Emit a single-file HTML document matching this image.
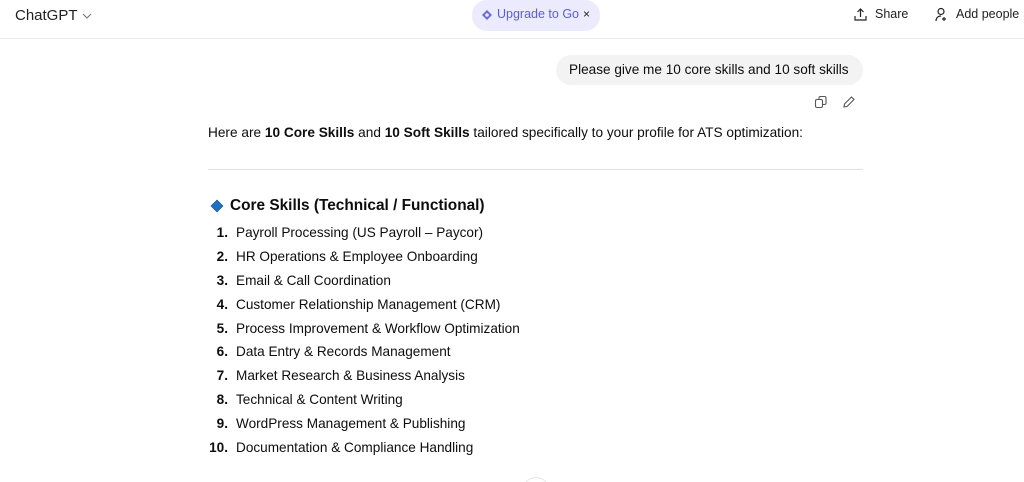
<!DOCTYPE html>
<html style="overflow:hidden;height:482px"><head><style>
body{margin:0;width:1024px;height:482px;overflow:hidden;background:#fff;font-family:"Liberation Sans",sans-serif;color:#0d0d0d;position:relative}
.a{position:absolute;white-space:nowrap}
.hdr{position:absolute;left:0;top:38px;width:1024px;height:1px;background:#ececec}
ol{position:absolute;left:208px;top:223px;margin:0;padding:0;list-style:none;font-size:13.6px}
ol li{height:23.9px;line-height:20px;position:relative;padding-left:28px}
ol li b{position:absolute;right:calc(100% - 20px);font-weight:bold}
</style></head><body>
<div class="a" style="left:15px;top:7px;font-size:15px;color:#222">ChatGPT <svg width="10" height="8" viewBox="0 0 10 8" style="margin-left:1px"><path d="M1 2l4 4 4-4" fill="none" stroke="#777" stroke-width="1.1"/></svg></div>
<div class="a" style="left:472px;top:0;width:128px;height:31px;border-radius:15px;background:#ebebfd"></div>
<svg class="a" style="left:481px;top:9px" width="12" height="12" viewBox="0 0 12 12"><path d="M6 1L11 6 6 11 1 6Z" fill="#6a6ad9"/><circle cx="6" cy="6" r="1.8" fill="#ebebfd"/></svg>
<div class="a" style="left:497px;top:7px;font-size:12.5px;color:#5c5cd6">Upgrade to Go</div>
<div class="a" style="left:583px;top:7px;font-size:12px;color:#222">×</div>
<svg class="a" style="left:853px;top:7px" width="15" height="15" viewBox="0 0 15 15"><path d="M7.5 10V2M4.5 5l3-3 3 3M2 9v4h11V9" fill="none" stroke="#222" stroke-width="1.2"/></svg>
<div class="a" style="left:875px;top:7px;font-size:12.5px;color:#222">Share</div>
<svg class="a" style="left:934px;top:7px" width="15" height="15" viewBox="0 0 15 15"><circle cx="7" cy="4.5" r="3" fill="none" stroke="#222" stroke-width="1.2"/><path d="M2 14c0-3 2-5 5-5M10 10v4M8 12h4" fill="none" stroke="#222" stroke-width="1.2"/></svg>
<div class="a" style="left:956px;top:7px;font-size:12.5px;color:#222">Add people</div>
<div class="hdr"></div>
<div class="a" style="left:556px;top:55px;width:307px;height:30px;border-radius:15px;background:#f3f3f3"></div>
<div class="a" style="left:569px;top:62px;font-size:13.6px">Please give me 10 core skills and 10 soft skills</div>
<svg class="a" style="left:814px;top:95px" width="14" height="14" viewBox="0 0 14 14"><rect x="1.5" y="4.5" width="7" height="8" rx="1.5" fill="none" stroke="#555" stroke-width="1.1"/><path d="M5 4V3a1.5 1.5 0 0 1 1.5-1.5h4A1.5 1.5 0 0 1 12 3v5a1.5 1.5 0 0 1-1.5 1.5H9" fill="none" stroke="#555" stroke-width="1.1"/></svg>
<svg class="a" style="left:842px;top:95px" width="14" height="14" viewBox="0 0 14 14"><path d="M2 12l.5-3 7-7 2.5 2.5-7 7z" fill="none" stroke="#555" stroke-width="1.1"/></svg>
<div class="a" style="left:208px;top:125px;font-size:13.65px">Here are <b>10 Core Skills</b> and <b>10 Soft Skills</b> tailored specifically to your profile for ATS optimization:</div>
<div class="a" style="left:208px;top:169px;width:655px;height:1px;background:#e0e0e0"></div>
<svg class="a" style="left:210px;top:199px" width="14" height="14" viewBox="0 0 14 14"><path d="M7 1L13 7 7 13 1 7Z" fill="#1f6fc5" stroke="#114a8a" stroke-width=".6"/></svg>
<div class="a" style="left:230px;top:197px;font-size:15.4px;font-weight:bold">Core Skills (Technical / Functional)</div>
<ol>
<li><b>1.</b>Payroll Processing (US Payroll – Paycor)</li>
<li><b>2.</b>HR Operations &amp; Employee Onboarding</li>
<li><b>3.</b>Email &amp; Call Coordination</li>
<li><b>4.</b>Customer Relationship Management (CRM)</li>
<li><b>5.</b>Process Improvement &amp; Workflow Optimization</li>
<li><b>6.</b>Data Entry &amp; Records Management</li>
<li><b>7.</b>Market Research &amp; Business Analysis</li>
<li><b>8.</b>Technical &amp; Content Writing</li>
<li><b>9.</b>WordPress Management &amp; Publishing</li>
<li><b>10.</b>Documentation &amp; Compliance Handling</li>
</ol>
<div class="a" style="left:523px;top:477px;width:24px;height:24px;border-radius:50%;border:1px solid #e5e5e5;background:#fff"></div>
</body></html>
